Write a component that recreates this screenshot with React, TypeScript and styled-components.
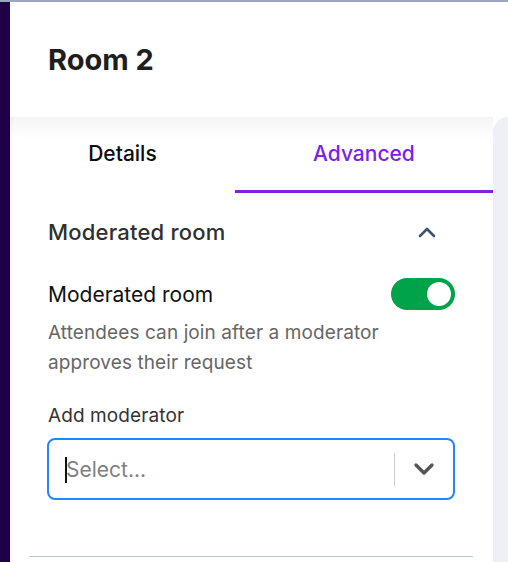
import React, { useState } from "react";
import styled, { createGlobalStyle } from "styled-components";

const GlobalStyle = createGlobalStyle`
  html, body {
    margin: 0;
    padding: 0;
    background: #ffffff;
    font-family: Inter, "Noto Sans", sans-serif;
  }
`;

type TabProps = { $active?: boolean };

export default function App() {
  const [tab, setTab] = useState("advanced");
  const [moderated, setModerated] = useState(true);

  return (
    <>
      <GlobalStyle />
      <Page>
        <SideBar />
        <Main>
          <Header>
            <Title>Room 2</Title>
          </Header>
          <Body>
            <Card>
              <Tabs>
                <Tab $active={tab === "details"} onClick={() => setTab("details")}>
                  Details
                </Tab>
                <Tab $active={tab === "advanced"} onClick={() => setTab("advanced")}>
                  Advanced
                </Tab>
              </Tabs>
              <Content>
                <SectionHeader>
                  <SectionTitle>Moderated room</SectionTitle>
                  <ChevronUp viewBox="0 0 20 14" width="20" height="14">
                    <polyline points="3,11 10,4 17,11" />
                  </ChevronUp>
                </SectionHeader>
                <ToggleRow>
                  <Label>Moderated room</Label>
                  <Switch $on={moderated} onClick={() => setModerated(!moderated)}>
                    <Knob />
                  </Switch>
                </ToggleRow>
                <Description>
                  Attendees can join after a moderator
                  <br />
                  approves their request
                </Description>
                <FieldLabel>Add moderator</FieldLabel>
                <SelectBox>
                  <SelectInput>
                    <Caret />
                    <Placeholder>Select...</Placeholder>
                  </SelectInput>
                  <Separator />
                  <Indicator>
                    <ChevronDown viewBox="0 0 22 14" width="22" height="14">
                      <polyline points="3,3 11,11 19,3" />
                    </ChevronDown>
                  </Indicator>
                </SelectBox>
              </Content>
              <Divider />
            </Card>
            <SidePanel />
          </Body>
        </Main>
      </Page>
    </>
  );
}

const Page = styled.div`
  display: flex;
  width: 508px;
  height: 562px;
  overflow: hidden;
  border-top: 2px solid #9aa7bf;
  box-sizing: border-box;
`;

const SideBar = styled.div`
  width: 10px;
  flex-shrink: 0;
  background: #1f0047;
`;

const Main = styled.div`
  flex: 1;
  display: flex;
  flex-direction: column;
  min-width: 0;
`;

const Header = styled.div`
  height: 115px;
  display: flex;
  align-items: center;
  padding-left: 38px;
  flex-shrink: 0;
`;

const Title = styled.h1`
  margin: 0;
  font-size: 29px;
  font-weight: 700;
  color: #1e1e1e;
`;

const Body = styled.div`
  flex: 1;
  display: flex;
`;

const Card = styled.div`
  flex: 1;
  background: linear-gradient(#f5f5f5 0px, #ffffff 22px);
  box-shadow: inset 3px 0 4px -2px rgba(0, 0, 0, 0.05);
`;

const Tabs = styled.div`
  display: flex;
`;

const Tab = styled.button<TabProps>`
  flex: 1 1 auto;
  height: 76px;
  background: transparent;
  border: none;
  border-bottom: 3px solid ${(p) => (p.$active ? "#7a22e6" : "transparent")};
  font-family: Inter, "Noto Sans", sans-serif;
  font-size: 21px;
  font-weight: 500;
  color: ${(p) => (p.$active ? "#7a22e6" : "#0d0d0d")};
  cursor: pointer;
  padding: 0;
`;

const Content = styled.div`
  padding: 24px 38px 0 38px;
`;

const SectionHeader = styled.div`
  height: 30px;
  display: flex;
  align-items: center;
  justify-content: space-between;
`;

const SectionTitle = styled.span`
  font-size: 22px;
  font-weight: 500;
  color: #2f2f2f;
  letter-spacing: 0.2px;
`;

const ChevronUp = styled.svg`
  margin-right: 18px;
  fill: none;
  stroke: #3d5472;
  stroke-width: 2.6;
  stroke-linecap: round;
  stroke-linejoin: round;
`;

const ToggleRow = styled.div`
  margin-top: 31px;
  height: 32px;
  display: flex;
  align-items: center;
  justify-content: space-between;
`;

const Label = styled.span`
  font-size: 21px;
  color: #111111;
`;

const Switch = styled.div<{ $on: boolean }>`
  width: 64px;
  height: 32px;
  border-radius: 16px;
  background: ${(p) => (p.$on ? "#00a24a" : "#c5cbd3")};
  display: flex;
  align-items: center;
  justify-content: ${(p) => (p.$on ? "flex-end" : "flex-start")};
  padding: 0 4px;
  box-sizing: border-box;
  cursor: pointer;
`;

const Knob = styled.div`
  width: 24px;
  height: 24px;
  border-radius: 50%;
  background: #ffffff;
`;

const Description = styled.p`
  margin: 8px 0 0 0;
  font-size: 19px;
  line-height: 30px;
  color: #666666;
  letter-spacing: 0.1px;
`;

const FieldLabel = styled.div`
  margin-top: 26px;
  font-size: 19px;
  line-height: 24px;
  color: #333333;
  letter-spacing: 0.1px;
`;

const SelectBox = styled.div`
  margin-top: 10px;
  height: 62px;
  width: 408px;
  margin-left: -1px;
  box-sizing: border-box;
  border: 2px solid #2684ff;
  border-radius: 8px;
  display: flex;
  align-items: center;
`;

const SelectInput = styled.div`
  flex: 1;
  display: flex;
  align-items: center;
  padding-left: 17px;
  position: relative;
`;

const Caret = styled.span`
  position: absolute;
  left: 16px;
  top: 0px;
  width: 2px;
  height: 26px;
  background: #111111;
`;

const Placeholder = styled.span`
  font-size: 21px;
  color: #808080;
`;

const Separator = styled.div`
  width: 1px;
  height: 33px;
  background: #cccccc;
`;

const Indicator = styled.div`
  width: 58px;
  display: flex;
  align-items: center;
  justify-content: center;
`;

const ChevronDown = styled.svg`
  fill: none;
  stroke: #555555;
  stroke-width: 3.4;
  stroke-linecap: round;
  stroke-linejoin: round;
`;

const Divider = styled.div`
  margin: 56px 20px 0 19px;
  height: 1px;
  background: #bcc5d1;
`;

const SidePanel = styled.div`
  width: 15px;
  flex-shrink: 0;
  background: #edf0f5;
  border-top-left-radius: 16px;
`;
